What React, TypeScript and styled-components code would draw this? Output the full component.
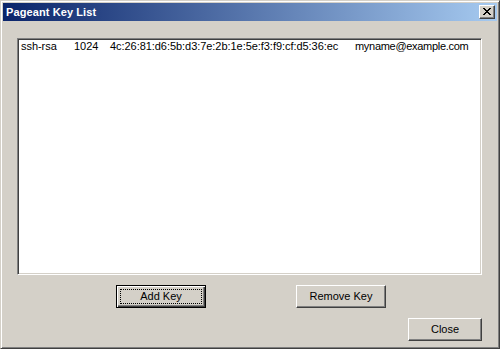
import React from 'react';
import styled, { createGlobalStyle } from 'styled-components';

const GlobalStyle = createGlobalStyle`
  html, body {
    margin: 0;
    padding: 0;
    background: #d4d0c8;
  }
  body {
    font-family: "Liberation Sans", Arial, sans-serif;
    font-size: 11px;
    color: #000;
  }
`;

const Window = styled.div`
  box-sizing: border-box;
  width: 500px;
  height: 349px;
  display: flex;
  flex-direction: column;
  background: #d4d0c8;
  border: 1px solid;
  border-color: #d4d0c8 #404040 #404040 #d4d0c8;
  box-shadow: inset 1px 1px #ffffff, inset -1px -1px #808080;
  padding: 2px;
`;

const TitleBar = styled.div`
  height: 18px;
  display: flex;
  align-items: center;
  justify-content: space-between;
  padding: 0 2px 0 3px;
  background: linear-gradient(to right, #0a246a, #a6caf0);
`;

const Title = styled.span`
  color: #fff;
  font-weight: bold;
  font-size: 11px;
  line-height: 13px;
  letter-spacing: 0.1px;
`;

const CaptionButton = styled.div`
  box-sizing: border-box;
  width: 16px;
  height: 14px;
  display: flex;
  align-items: center;
  justify-content: center;
  background: #d4d0c8;
  border: 1px solid;
  border-color: #ffffff #404040 #404040 #ffffff;
  box-shadow: inset -1px -1px #808080;
  padding: 0 1px 1px 0;
`;

const Body = styled.div`
  flex: 1;
  display: flex;
  flex-direction: column;
  padding: 17px 15px 0 14px;
`;

const ListBox = styled.div`
  box-sizing: border-box;
  height: 237px;
  background: #fff;
  border: 1px solid;
  border-color: #808080 #ffffff #ffffff #808080;
  box-shadow: inset 1px 1px #404040, inset -1px -1px #d4d0c8;
  padding: 1px 3px;
`;

const KeyRow = styled.div`
  display: grid;
  grid-template-columns: 53px 36px 245px auto;
  line-height: 13px;
  white-space: nowrap;
`;

const Cell = styled.span<{ $tight?: boolean }>`
  font-size: 11px;
  letter-spacing: ${p => (p.$tight ? '-0.3px' : '-0.05px')};
`;

const ButtonRow = styled.div<{ $justify: string; $pad: number }>`
  display: flex;
  justify-content: ${p => p.$justify};
  gap: 90px;
  margin-top: 10px;
  padding-left: ${p => p.$pad}px;
`;

const Button = styled.button<{ $width: number; $default?: boolean }>`
  position: relative;
  box-sizing: border-box;
  width: ${p => p.$width}px;
  height: 23px;
  padding: 0 0 1px;
  background: #d4d0c8;
  font-family: "Liberation Sans", Arial, sans-serif;
  font-size: 11px;
  color: #000;
  border: 1px solid;
  border-color: #ffffff #404040 #404040 #ffffff;
  box-shadow: inset -1px -1px #808080;
  ${p =>
    p.$default &&
    `
    border: 1px solid #000;
    box-shadow: inset 1px 1px #ffffff, inset -1px -1px #404040, inset -2px -2px #808080;
    &::after {
      content: '';
      position: absolute;
      left: 3px;
      top: 3px;
      right: 3px;
      bottom: 3px;
      border: 1px dotted #000;
    }
  `}
`;

const CloseIcon = () => (
  <svg width="8" height="7" viewBox="0 0 8 7">
    <path d="M0 0h2v1h1v1h2V1h1V0h2v1H7v1H6v1H5v1h1v1h1v1h1v1H6V6H5V5H3v1H2v1H0V6h1V5h1V4h1V3H2V2H1V1H0z" fill="#000" />
  </svg>
);

export default function App() {
  return (
    <>
      <GlobalStyle />
      <Window>
        <TitleBar>
          <Title>Pageant Key List</Title>
          <CaptionButton>
            <CloseIcon />
          </CaptionButton>
        </TitleBar>
        <Body>
          <ListBox>
            <KeyRow>
              <Cell>ssh-rsa</Cell>
              <Cell>1024</Cell>
              <Cell>4c:26:81:d6:5b:d3:7e:2b:1e:5e:f3:f9:cf:d5:36:ec</Cell>
              <Cell $tight>myname@example.com</Cell>
            </KeyRow>
          </ListBox>
          <ButtonRow $justify="flex-start" $pad={99}>
            <Button $width={90} $default>Add Key</Button>
            <Button $width={90}>Remove Key</Button>
          </ButtonRow>
          <ButtonRow $justify="flex-end" $pad={0}>
            <Button $width={74}>Close</Button>
          </ButtonRow>
        </Body>
      </Window>
    </>
  );
}
